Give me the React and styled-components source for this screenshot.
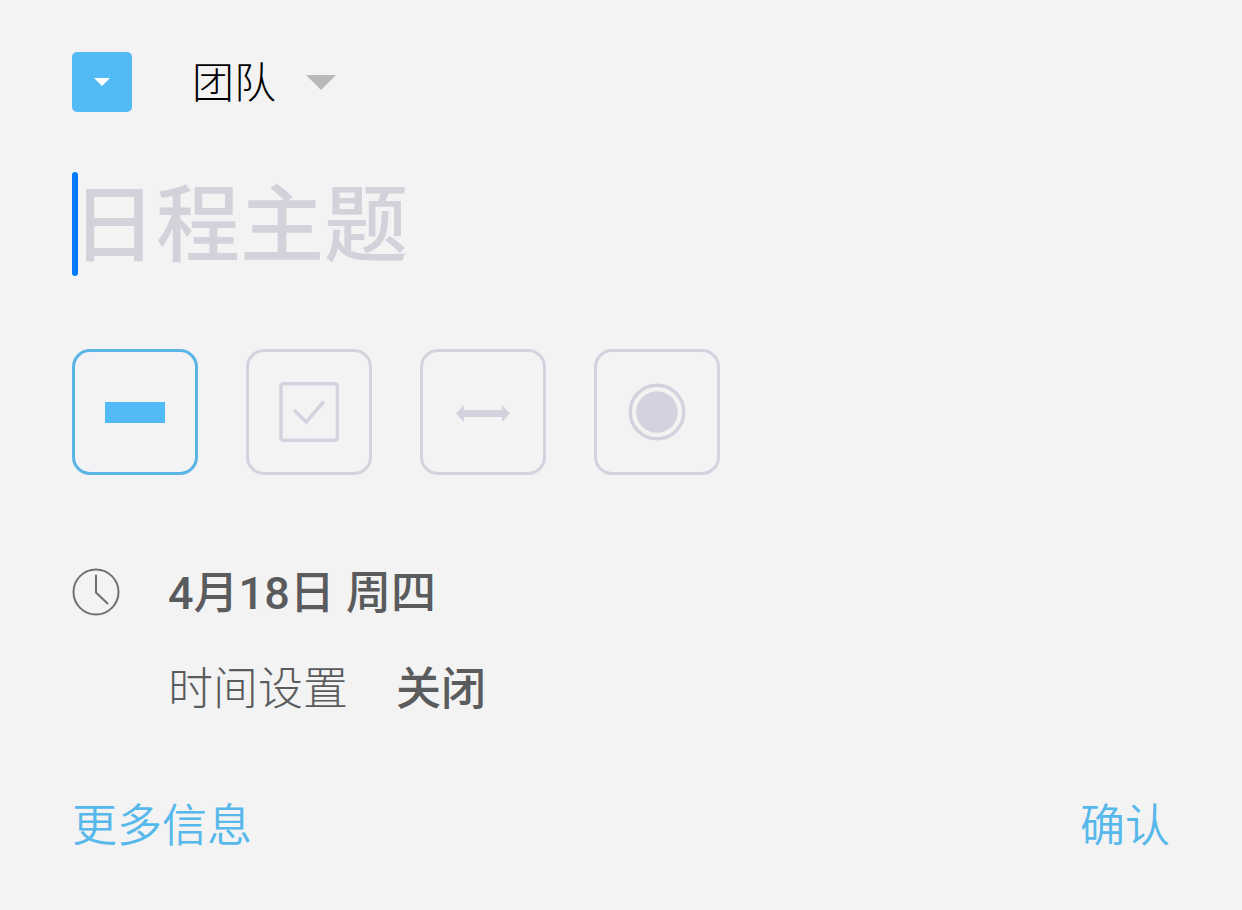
import React, { useState } from "react";
import styled, { createGlobalStyle } from "styled-components";

const GlobalStyle = createGlobalStyle`
  *, *::before, *::after { box-sizing: border-box; }
  body {
    margin: 0;
    background: #f3f3f3;
    color: #5a5b5d;
    font-family: Roboto, "Noto Sans CJK SC", sans-serif;
  }
  button, input, select { font: inherit; color: inherit; }
`;

const Form = styled.form`
  display: flex;
  flex-direction: column;
  padding: 52px 72px;
`;

const TopRow = styled.div`
  display: flex;
  align-items: center;
  gap: 60px;
  height: 60px;
`;

const ColorButton = styled.button`
  display: grid;
  place-items: center;
  width: 60px;
  height: 60px;
  padding: 0;
  border: 0;
  border-radius: 5px;
  background: #52baf4;
  color: #fff;
`;

const SelectWrap = styled.label`
  display: flex;
  align-items: center;
  gap: 29px;
`;

const Calendar = styled.select`
  appearance: none;
  height: 60px;
  padding: 4px 0 0;
  border: 0;
  outline: 0;
  background: none;
  color: #000;
  font-size: 42px;
  font-weight: 300;
  line-height: 56px;
`;

const TitleField = styled.div`
  display: flex;
  align-items: center;
  height: 104px;
  margin-top: 60px;
`;

const Caret = styled.span`
  flex: none;
  width: 6px;
  height: 104px;
  margin-right: -6px;
  border-radius: 3px;
  background: #007aff;
`;

const TitleInput = styled.input`
  flex: 1;
  min-width: 0;
  height: 104px;
  padding: 4px 0 0;
  border: 0;
  outline: 0;
  background: none;
  caret-color: #007aff;
  font-size: 84px;
  font-weight: 500;
  &::placeholder { color: #d2d2db; opacity: 1; }
`;

const Types = styled.div`
  display: flex;
  flex-wrap: wrap;
  gap: 48px;
  margin-top: 73px;
`;

const TypeOption = styled.label`
  display: grid;
  width: 126px;
  height: 126px;
  color: ${(p) => (p.$active ? "#52baf4" : "#d3d3df")};
  > * { grid-area: 1 / 1; }
`;

const TypeRadio = styled.input`
  appearance: none;
  width: 126px;
  height: 126px;
  margin: 0;
  border: 3px solid ${(p) => (p.checked ? "#5ab5e6" : "#d3d3df")};
  border-radius: 18px;
  background: ${(p) => (p.checked ? "#f3f3f5" : "transparent")};
`;

const TypeIcon = styled.svg`
  place-self: center;
  width: 60px;
  height: 60px;
  pointer-events: none;
`;

const Schedule = styled.section`
  display: grid;
  grid-template-columns: 48px 1fr;
  column-gap: 48px;
  row-gap: 36px;
  align-items: center;
  margin-top: 87px;
`;

const TimeRow = styled.div`
  grid-column: 2;
  display: flex;
  gap: 48px;
`;

const TimeLabel = styled.label`
  padding-top: 4px;
  font-size: 45px;
  line-height: 56px;
  font-weight: 300;
`;

const TextButton = styled.button`
  height: 60px;
  padding: 4px 0 0;
  border: 0;
  background: none;
  text-align: left;
  font-size: 45px;
  line-height: 56px;
  font-weight: ${(p) => p.$weight || 500};
  color: ${(p) => (p.$accent ? "#57b8ec" : "inherit")};
`;

const Footer = styled.footer`
  display: flex;
  justify-content: space-between;
  margin-top: 77px;
`;

const TYPES = [
  { id: "event", label: "日程", icon: <rect x="0" y="20" width="60" height="21" fill="currentColor" /> },
  {
    id: "todo",
    label: "待办",
    icon: (
      <g fill="none" stroke="currentColor" strokeWidth="3.5">
        <rect x="2" y="1.8" width="56.5" height="56.5" rx="2.5" />
        <path d="M16.3 29.2 27.3 40 44 20.5" strokeLinecap="round" />
      </g>
    ),
  },
  {
    id: "span",
    label: "时段",
    icon: <path d="M3 31.5 11 23v5h38v-5l8 8.5-8 8.5v-5H11v5z" fill="currentColor" />,
  },
  {
    id: "record",
    label: "记录",
    icon: (
      <g>
        <circle cx="30" cy="30" r="26.8" fill="none" stroke="currentColor" strokeWidth="3.5" />
        <circle cx="30" cy="30" r="20.8" fill="currentColor" />
      </g>
    ),
  },
];

export default function App() {
  const [type, setType] = useState("event");
  return (
    <>
      <GlobalStyle />
      <Form onSubmit={(e) => e.preventDefault()}>
        <TopRow>
          <ColorButton type="button" aria-label="颜色">
            <svg width="16" height="8" viewBox="0 0 16 8" aria-hidden="true">
              <path d="M0 0h16L8 8z" fill="currentColor" />
            </svg>
          </ColorButton>
          <SelectWrap>
            <Calendar aria-label="日历">
              <option>团队</option>
            </Calendar>
            <svg width="30" height="15" viewBox="0 0 30 15" aria-hidden="true">
              <path d="M0 0h30L15 15z" fill="#b8b9bb" />
            </svg>
          </SelectWrap>
        </TopRow>

        <TitleField>
          <Caret />
          <TitleInput type="text" placeholder="日程主题" aria-label="日程主题" />
        </TitleField>

        <Types role="radiogroup" aria-label="类型">
          {TYPES.map((t) => (
            <TypeOption key={t.id} $active={type === t.id}>
              <TypeRadio
                type="radio"
                name="type"
                aria-label={t.label}
                checked={type === t.id}
                onChange={() => setType(t.id)}
              />
              <TypeIcon viewBox="0 0 60 60" aria-hidden="true">{t.icon}</TypeIcon>
            </TypeOption>
          ))}
        </Types>

        <Schedule>
          <svg width="48" height="48" viewBox="0 0 48 48" fill="none" stroke="#6f7072" strokeWidth="2" aria-hidden="true">
            <circle cx="24" cy="24" r="22.5" />
            <path d="M24 7.5v17L35.5 35.5" strokeLinecap="round" />
          </svg>
          <TextButton type="button">4月18日 周四</TextButton>
          <TimeRow>
            <TimeLabel htmlFor="time-setting">时间设置</TimeLabel>
            <TextButton type="button" id="time-setting">关闭</TextButton>
          </TimeRow>
        </Schedule>

        <Footer>
          <TextButton type="button" $accent $weight={350}>更多信息</TextButton>
          <TextButton type="submit" $accent $weight={350}>确认</TextButton>
        </Footer>
      </Form>
    </>
  );
}
